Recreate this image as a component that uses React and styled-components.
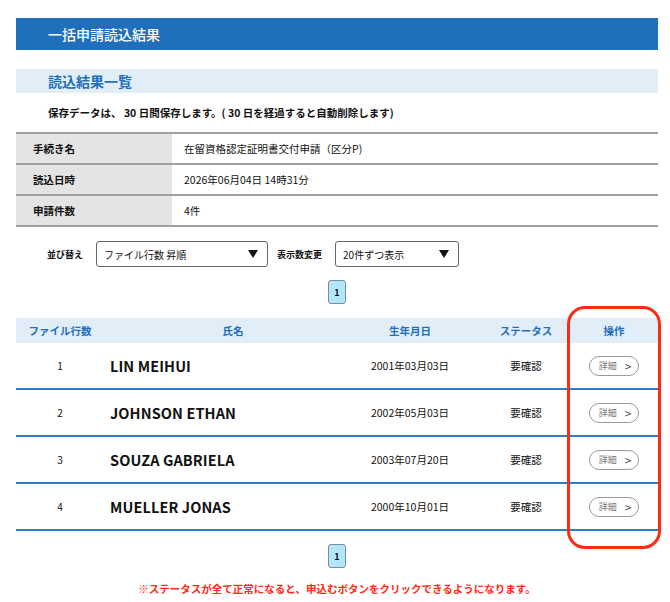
import React from 'react'
import styled, { createGlobalStyle } from 'styled-components'

const GlobalStyle = createGlobalStyle`
  body {
    margin: 0;
    background: #fff;
    font-family: "Noto Sans CJK JP", "Noto Sans", sans-serif;
    color: #111;
  }
`

const Page = styled.div`
  padding: 18px 12px 0 16px;
  width: 670px;
  box-sizing: border-box;
`

const TitleBar = styled.h1`
  margin: 0;
  height: 32px;
  background: #1f6fbd;
  color: #fff;
  font-size: 14px;
  font-weight: 500;
  display: flex;
  align-items: center;
  padding-left: 32px;
`

const SubTitle = styled.h2`
  margin: 19px 0 0;
  height: 24px;
  background: #e1eef8;
  color: #1f6fbd;
  font-size: 14px;
  font-weight: 700;
  display: flex;
  align-items: center;
  padding-left: 32px;
`

const Note = styled.p`
  margin: 12px 0 0 32px;
  font-size: 10.5px;
  font-weight: 700;
  line-height: 16px;
`

const InfoTable = styled.div`
  margin-top: 11px;
  border-top: 2px solid #a0a0a0;
`

const InfoRow = styled.div`
  display: grid;
  grid-template-columns: 156px 1fr;
  height: 29px;
  border-bottom: 2px solid #a0a0a0;
  font-size: 10.5px;
`

const InfoLabel = styled.div`
  background: #e4e4e4;
  font-weight: 700;
  display: flex;
  align-items: center;
  padding-left: 17px;
`

const InfoValue = styled.div`
  display: flex;
  align-items: center;
  padding-left: 12px;
`

const Controls = styled.div`
  display: flex;
  align-items: center;
  margin: 14px 0 0 31px;
  height: 26px;
`

const ControlLabel = styled.span`
  font-size: 9px;
  font-weight: 700;
  margin-right: 13px;
  &:not(:first-child) {
    margin-left: 9px;
  }
`

const Select = styled.div`
  width: ${p => p.$width}px;
  height: 26px;
  box-sizing: border-box;
  border: 1px solid #666;
  border-radius: 3px;
  display: flex;
  align-items: center;
  justify-content: space-between;
  padding: 0 9px 0 7px;
  font-size: 10px;
`

const Arrow = styled.span`
  width: 0;
  height: 0;
  border-left: 5.5px solid transparent;
  border-right: 5.5px solid transparent;
  border-top: 8px solid #111;
`

const Pager = styled.div`
  display: flex;
  justify-content: center;
  margin-top: ${p => p.$top}px;
`

const PageButton = styled.button`
  width: 18px;
  height: 24px;
  padding: 0;
  border: 1px solid #7b8c99;
  border-radius: 3px;
  background: #b4e6fb;
  font-family: inherit;
  font-size: 9px;
  font-weight: 700;
  color: #111;
`

const TableWrap = styled.div`
  position: relative;
  margin-top: 14px;
`

const Grid = styled.div`
  display: grid;
  grid-template-columns: 88px 258px 96px 112px 88px;
  align-items: center;
  height: ${p => p.$height}px;
  background: ${p => (p.$head ? '#e1eef8' : 'transparent')};
  border-bottom: ${p => (p.$head ? 'none' : '2px solid #2f7bc4')};
`

const HeadCell = styled.div`
  color: #1f6fbd;
  font-size: 10.5px;
  font-weight: 700;
  text-align: center;
  padding-left: ${p => p.$pad || 0}px;
`

const Cell = styled.div`
  text-align: center;
  font-size: ${p => p.$size || 10.5}px;
  padding-left: ${p => p.$pad || 0}px;
`

const Name = styled.div`
  font-size: 14.5px;
  font-weight: 700;
  padding-left: 6px;
  letter-spacing: 0.1px;
`

const DetailWrap = styled.div`
  display: flex;
  justify-content: center;
`

const DetailButton = styled.button`
  width: 50px;
  height: 20px;
  box-sizing: border-box;
  border: 1px solid #9a9a9a;
  border-radius: 10px;
  background: #fff;
  color: #777;
  font-family: inherit;
  font-size: 9px;
  display: flex;
  align-items: center;
  justify-content: center;
  gap: 8px;
  padding: 0 0 0 2px;

  span {
    font-size: 12px;
    color: #555;
  }
`

const Highlight = styled.div`
  position: absolute;
  top: -12px;
  bottom: -18px;
  left: 551px;
  width: 94px;
  box-sizing: border-box;
  border: 3.5px solid #ff2a14;
  border-radius: 18px;
  pointer-events: none;
`

const Warning = styled.p`
  margin: 13px 0 0;
  text-align: center;
  color: #ff2a14;
  font-size: 10.5px;
  font-weight: 700;
`

const rows = [
  { no: 1, name: 'LIN MEIHUI', birth: '2001年03月03日' },
  { no: 2, name: 'JOHNSON ETHAN', birth: '2002年05月03日' },
  { no: 3, name: 'SOUZA GABRIELA', birth: '2003年07月20日' },
  { no: 4, name: 'MUELLER JONAS', birth: '2000年10月01日' },
]

export default function App() {
  return (
    <Page>
      <GlobalStyle />
      <TitleBar>一括申請読込結果</TitleBar>
      <SubTitle>読込結果一覧</SubTitle>
      <Note>保存データは、 30 日間保存します。( 30 日を経過すると自動削除します)</Note>

      <InfoTable>
        <InfoRow>
          <InfoLabel>手続き名</InfoLabel>
          <InfoValue>在留資格認定証明書交付申請（区分P)</InfoValue>
        </InfoRow>
        <InfoRow>
          <InfoLabel>読込日時</InfoLabel>
          <InfoValue>2026年06月04日 14時31分</InfoValue>
        </InfoRow>
        <InfoRow>
          <InfoLabel>申請件数</InfoLabel>
          <InfoValue>4件</InfoValue>
        </InfoRow>
      </InfoTable>

      <Controls>
        <ControlLabel>並び替え</ControlLabel>
        <Select $width={172}>
          ファイル行数 昇順
          <Arrow />
        </Select>
        <ControlLabel>表示数変更</ControlLabel>
        <Select $width={124}>
          20件ずつ表示
          <Arrow />
        </Select>
      </Controls>

      <Pager $top={13}>
        <PageButton>1</PageButton>
      </Pager>

      <TableWrap>
        <Grid $head $height={25}>
          <HeadCell>ファイル行数</HeadCell>
          <HeadCell>氏名</HeadCell>
          <HeadCell>生年月日</HeadCell>
          <HeadCell $pad={24}>ステータス</HeadCell>
          <HeadCell>操作</HeadCell>
        </Grid>
        {rows.map(r => (
          <Grid key={r.no} $height={45}>
            <Cell $size={10}>{r.no}</Cell>
            <Name>{r.name}</Name>
            <Cell>{r.birth}</Cell>
            <Cell $pad={24}>要確認</Cell>
            <DetailWrap>
              <DetailButton>
                詳細<span>&gt;</span>
              </DetailButton>
            </DetailWrap>
          </Grid>
        ))}
        <Highlight />
      </TableWrap>

      <Pager $top={13}>
        <PageButton>1</PageButton>
      </Pager>

      <Warning>※ステータスが全て正常になると、申込むボタンをクリックできるようになります。</Warning>
    </Page>
  )
}
